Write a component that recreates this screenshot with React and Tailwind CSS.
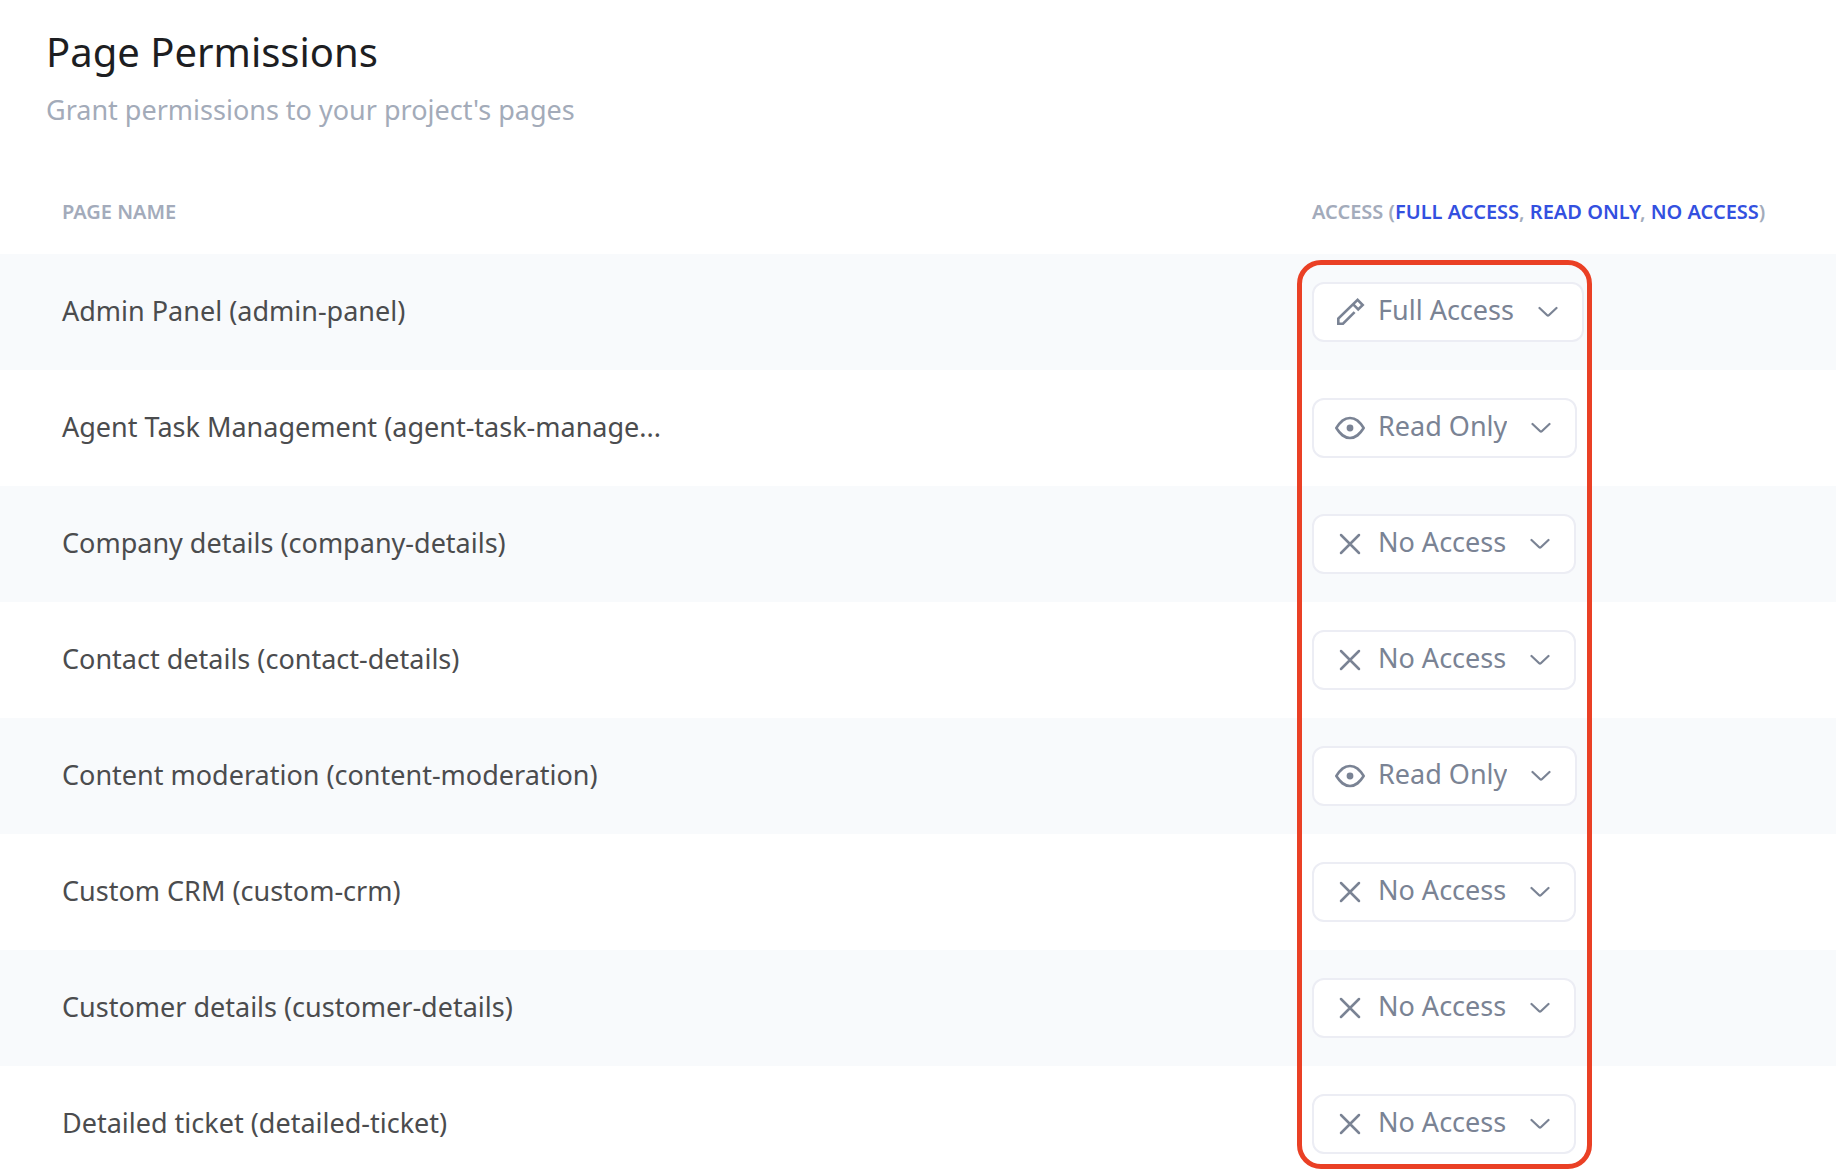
const PAGES = [
  { name: 'Admin Panel (admin-panel)', access: 'Full Access' },
  { name: 'Agent Task Management (agent-task-manage...', access: 'Read Only' },
  { name: 'Company details (company-details)', access: 'No Access' },
  { name: 'Contact details (contact-details)', access: 'No Access' },
  { name: 'Content moderation (content-moderation)', access: 'Read Only' },
  { name: 'Custom CRM (custom-crm)', access: 'No Access' },
  { name: 'Customer details (customer-details)', access: 'No Access' },
  { name: 'Detailed ticket (detailed-ticket)', access: 'No Access' },
];

const LEVELS = ['Full Access', 'Read Only', 'No Access'];

const ICON_CLASS = 'pointer-events-none absolute left-[22px] size-8';

function AccessIcon({ level }) {
  if (level === 'Full Access') {
    return (
      <svg viewBox="0 0 32 32" className={ICON_CLASS} fill="none" stroke="currentColor" strokeWidth="2.6" aria-hidden="true">
        <path d="M20.6 16.2 9 27.7H4.3V22.6L23.6 3.8 28.7 9 24.2 13.4 19 8.2" />
      </svg>
    );
  }
  if (level === 'Read Only') {
    return (
      <svg viewBox="0 0 32 32" className={ICON_CLASS} fill="none" stroke="currentColor" strokeWidth="2.6" strokeLinejoin="round" aria-hidden="true">
        <path d="M2.3 16C6.5 9.5 10 6 16 6s9.500 3.500 13.700 10C25.500 22.500 22 26 16 26S6.500 22.500 2.300 16Z" />
        <circle cx="16" cy="16" r="3.4" fill="currentColor" stroke="none" />
      </svg>
    );
  }
  return (
    <svg viewBox="0 0 32 32" className={ICON_CLASS} fill="none" stroke="currentColor" strokeWidth="2.5" strokeLinecap="round" aria-hidden="true">
      <path d="M7 7 25 25M25 7 7 25" />
    </svg>
  );
}

function AccessSelect({ page, level }) {
  return (
    <div className="relative flex w-fit items-center text-[#7a8394]">
      <select
        aria-label={`Access for ${page}`}
        defaultValue={level}
        className="field-sizing-content h-[60px] appearance-none rounded-xl border-2 border-[#ecedf4] bg-white pr-[68px] pb-1 pl-[64px] text-[27px] leading-11"
      >
        {LEVELS.map((option) => (
          <option key={option}>{option}</option>
        ))}
      </select>
      <AccessIcon level={level} />
      <svg viewBox="0 0 20 12" className="pointer-events-none absolute right-[26px] h-3 w-5" fill="none" stroke="currentColor" strokeWidth="2.2" strokeLinecap="round" strokeLinejoin="round" aria-hidden="true">
        <path d="M1.5 2 9.2 9.2Q10 10 10.8 9.2L18.5 2" />
      </svg>
    </div>
  );
}

function AccessLink({ children }) {
  return (
    <a href="#" className="text-[#3350e0]">
      {children}
    </a>
  );
}

export default function App() {
  return (
    <main className="h-screen overflow-hidden bg-white font-['Noto_Sans',sans-serif]">
      <header className="px-[46px] pt-7 pb-10">
        <h1 className="text-[40px] leading-12 text-[#1d1e22]">Page Permissions</h1>
        <p className="mt-4 text-[27px] leading-9 text-[#a3abb9]">Grant permissions to your project's pages</p>
      </header>
      <div className="relative">
        <table className="w-full table-fixed">
          <thead>
            <tr className="h-[86px] text-left text-[20px] text-[#a3abbb]">
              <th className="pt-0.5 pl-[62px] font-semibold">PAGE NAME</th>
              <th className="w-[524px] pt-0.5 font-semibold whitespace-nowrap">
                ACCESS (<AccessLink>FULL ACCESS</AccessLink>, <AccessLink>READ ONLY</AccessLink>, <AccessLink>NO ACCESS</AccessLink>)
              </th>
            </tr>
          </thead>
          <tbody>
            {PAGES.map(({ name, access }) => (
              <tr key={name} className="h-[116px] odd:bg-[#f8fafc]">
                <td className="pb-0.5 pl-[62px] text-[27px] text-[#4b4c4e]">{name}</td>
                <td>
                  <AccessSelect page={name} level={access} />
                </td>
              </tr>
            ))}
          </tbody>
        </table>
        <div className="pointer-events-none absolute top-[92px] right-[244px] bottom-[13px] w-[295px] rounded-3xl border-5 border-[#ea4025]" />
      </div>
    </main>
  );
}
